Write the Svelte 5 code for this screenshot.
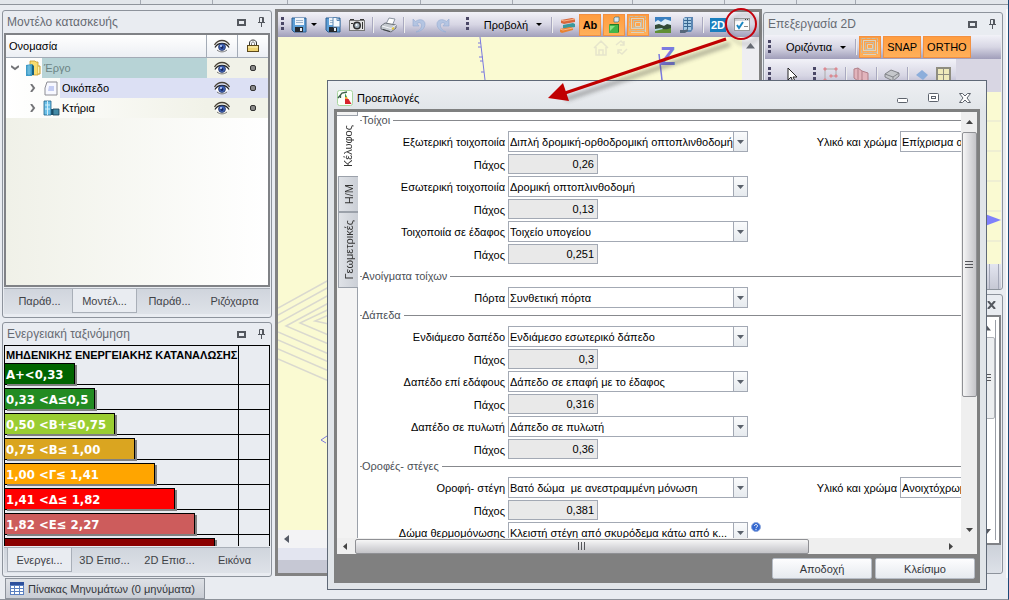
<script lang="ts">
	type Row = { label: string; value: string; thickness?: string; finish?: string; help?: boolean };
	type Group = { title: string; rows: Row[] };

	const groups: Group[] = [
		{
			title: 'Τοίχοι',
			rows: [
				{
					label: 'Εξωτερική τοιχοποιία',
					value: 'Διπλή δρομική-ορθοδρομική οπτοπλινθοδομή',
					thickness: '0,26',
					finish: 'Επίχρισμα ανοιχτόχρωμο'
				},
				{ label: 'Εσωτερική τοιχοποιία', value: 'Δρομική οπτοπλινθοδομή', thickness: '0,13' },
				{ label: 'Τοιχοποιία σε έδαφος', value: 'Τοιχείο υπογείου', thickness: '0,251' }
			]
		},
		{
			title: 'Ανοίγματα τοίχων',
			rows: [{ label: 'Πόρτα', value: 'Συνθετική πόρτα' }]
		},
		{
			title: 'Δάπεδα',
			rows: [
				{ label: 'Ενδιάμεσο δαπέδο', value: 'Ενδιάμεσο εσωτερικό δάπεδο', thickness: '0,3' },
				{ label: 'Δαπέδο επί εδάφους', value: 'Δάπεδο σε επαφή με το έδαφος', thickness: '0,316' },
				{ label: 'Δαπέδο σε πυλωτή', value: 'Δάπεδο σε πυλωτή', thickness: '0,36' }
			]
		},
		{
			title: 'Οροφές- στέγες',
			rows: [
				{
					label: 'Οροφή- στέγη',
					value: 'Βατό δώμα \u00a0με ανεστραμμένη μόνωση',
					thickness: '0,381',
					finish: 'Ανοιχτόχρωμη επίστρωση'
				},
				{
					label: 'Δώμα θερμομόνωσης',
					value: 'Κλειστή στέγη από σκυρόδεμα κάτω από κ...',
					help: true
				}
			]
		}
	];

	const energy = [
		{ label: 'Α+<0,33', width: 70, color: '#006400' },
		{ label: '0,33 <Α≤0,5', width: 90, color: '#228b22' },
		{ label: '0,50 <Β+≤0,75', width: 110, color: '#9acd32' },
		{ label: '0,75 <Β≤ 1,00', width: 130, color: '#daa520' },
		{ label: '1,00 <Γ≤ 1,41', width: 150, color: '#ffa500' },
		{ label: '1,41 <Δ≤ 1,82', width: 170, color: '#ff0000' },
		{ label: '1,82 <Ε≤ 2,27', width: 190, color: '#cd5c5c' },
		{ label: '', width: 210, color: '#8b0000' }
	];

	const tree = [
		{ label: 'Έργο', icon: 'project', level: 0 },
		{ label: 'Οικόπεδο', icon: 'plot', level: 1 },
		{ label: 'Κτήρια', icon: 'building', level: 1 }
	];

	const ribbonGroups = [141, 72, 75, 133, 92, 120, 92, 72, 59];
	const modelTabs = ['Παράθ...', 'Μοντέλ...', 'Παράθ...', 'Ριζόχαρτα'];
	const energyTabs = ['Ενεργει...', '3D Επισ...', '2D Επισ...', 'Εικόνα'];
	const dialogTabs = ['Κέλυφος', 'Η/Μ', 'Γεωμετρικές'];
</script>

{#snippet icon(name: string)}
	{#if name === 'save' || name === 'saveAs'}
		<svg width="16" height="16" viewBox="0 0 16 16">
			<path d="M1 1h14v14H3l-2-2z" fill="#5e9fd6" stroke="#2c5f92" />
			<path d="M4 1h9v7H4z" fill="#eef4fa" />
			<path d="M5 3.500h7M5 5.500h7" stroke="#9db4cc" />
			<path d="M4 10h8v5H4z" fill="#26292e" />
			<path d="M9 11h2v3H9z" fill="#e8edf2" />
			{#if name === 'saveAs'}
				<path d="M8 .5h4l3 3V10H8z" fill="#f5f9fd" stroke="#5d88b4" />
				<path d="M12 .5v3h3" fill="none" stroke="#5d88b4" />
			{/if}
		</svg>
	{:else if name === 'camera'}
		<svg width="16" height="14" viewBox="0 0 16 14">
			<path d="M1 1h4v2H1zM11 1h4v3h-4z" fill="#3c3c3c" />
			<rect x="0.500" y="2.500" width="15" height="10" fill="#e4e4e4" stroke="#777" />
			<circle cx="8" cy="7.500" r="4" fill="#2c2c2c" />
			<circle cx="8" cy="7.500" r="2.500" fill="#a4b2bb" />
			<circle cx="7.500" cy="7" r="1" fill="#fff" />
			<path d="M13.500 4v7M2 5.500h2" stroke="#333" />
		</svg>
	{:else if name === 'print'}
		<svg width="17" height="16" viewBox="0 0 17 16">
			<path d="M6 7l3-6 6 1-3 7z" fill="#fff" stroke="#8b94a0" />
			<path d="M1 9l4-3 11 2v3l-5 4-10-3z" fill="#c5cad0" stroke="#6c727a" />
			<path d="M2 9l9 2.500L16 8" fill="none" stroke="#f4f6fa" />
			<path d="M3 12l7 2v1l-7-2z" fill="#3a3d42" />
			<path d="M12 12l2-1" stroke="#e3c43c" stroke-width="2" />
		</svg>
	{:else if name === 'undo' || name === 'redo'}
		<svg width="14" height="16" viewBox="0 0 14 16" class:flip={name === 'redo'}>
			<path
				d="M1 2v7h6L5 6.500c3-2 5 0 4.500 3C9 12 7 14 4 15c5-.5 9-3.500 9-8C13 3 8 1 3.500 4.500z"
				fill="#b4c5e2"
				stroke="#93a9d0"
				stroke-width=".6"
			/>
		</svg>
	{:else if name === 'bricks'}
		<svg width="17" height="16" viewBox="0 0 17 16">
			<path d="M2 3l11-2 3 1v3L5 7 2 6z" fill="#d9663b" />
			<path d="M4 8l10-2 2 1v3L6 12l-2-1z" fill="#39999d" />
			<path d="M1 12l10-2 3 1v2L3 16l-2-1z" fill="#e88330" />
			<path d="M2 3l3 1 11-2M1 12l3 1 10-2" stroke="#f8b488" fill="none" />
		</svg>
	{:else if name === 'cube'}
		<svg width="16" height="18" viewBox="0 0 16 18">
			<path d="M8 2l1-1h4v4l-1 1H8z" fill="#d7e8f1" stroke="#43717e" stroke-width=".7" />
			<path d="M3 9l1-1h9v8l-1 1H3z" fill="#267b26" />
			<path d="M3 9h9v8H3z" fill="#43b649" />
			<path d="M4 10h5l-5 5z" fill="#8be085" />
		</svg>
	{:else if name === 'rings'}
		<svg width="18" height="18" viewBox="0 0 18 18" fill="none" stroke="#c4bca9">
			<rect x="0.500" y="0.500" width="16" height="14" stroke-dasharray="4 1" />
			<rect x="2.500" y="2.500" width="12" height="10" stroke="#dcd2bd" />
			<rect x="4.500" y="4.500" width="8" height="7" />
			<path d="M2 16.500h13M16.500 4v12M6.500 6.500h5v4h-5z" stroke="#dcd2bd" />
		</svg>
	{:else if name === 'photo'}
		<svg width="16" height="16" viewBox="0 0 16 16">
			<path fill="#3a7fc0" d="M0 0h16v8H0z" />
			<path d="M0 5l3-2 3 2 4-3 6 2v4H0z" fill="#dcecf6" />
			<path d="M0 8l4-1 5 2 3-2 4 1v8H0z" fill="#324b37" />
			<path d="M0 13c5-3 9 1 16-2v5H0z" fill="#5f8f35" />
			<path d="M0 12l7-1 1 1-8 2z" fill="#b5dbe6" />
		</svg>
	{:else if name === 'tower'}
		<svg width="14" height="16" viewBox="0 0 14 16">
			<path d="M3 2l2-2h8v12l-2 3H3z" fill="#5b86b3" />
			<path d="M4 1h7v12H4z" fill="#a5cae4" />
			<path d="M4 3.500h7M4 6.500h7M4 9.500h7M7.500 1v11" stroke="#386790" />
			<path d="M0 13h5l3-1v2l-3 2H0z" fill="#56677a" />
		</svg>
	{:else if name === 'check'}
		<svg width="16" height="14" viewBox="0 0 16 14">
			<rect x="0.500" y="0.500" width="15" height="12" fill="#fcfcfc" stroke="#999" />
			<path d="M1 1h14v2H1z" fill="#d3d6dc" />
			<path d="M11 1.500h1M13 1.500h1" stroke="#444" />
			<path d="M3 7l2 3 4-6" fill="none" stroke="#1b87c2" stroke-width="2" />
			<path d="M10 8.500h4" stroke="#888" />
		</svg>
	{:else if name === 'eye'}
		<svg width="16" height="14" viewBox="0 0 16 14">
			<path d="M1 8C4 3 12 3 15 8c-3 5-11 5-14 0z" fill="#fff" />
			<path d="M.5 6C4 0 12 0 15.500 6" fill="none" stroke="#4a4338" stroke-width="1.300" />
			<path d="M1 8.500C4 3 12 3 15 8.500" fill="none" stroke="#222" stroke-width="1.200" />
			<path d="M3 11c3 2.500 7 2.500 10 0" fill="none" stroke="#777" />
			<circle cx="8" cy="8" r="3.500" fill="#3e61b4" stroke="#22305b" stroke-width=".7" />
			<circle cx="8" cy="8.500" r="1.400" fill="#172862" />
			<circle cx="7" cy="7" r="1" fill="#c7d8ff" />
		</svg>
	{:else if name === 'lock'}
		<svg width="12" height="14" viewBox="0 0 12 14">
			<path d="M2.500 7V4c0-4 7-4 7 0v3" fill="none" stroke="#333" />
			<path d="M4.500 7V4.500c0-2 3-2 3 0V7" fill="none" stroke="#777" />
			<rect x="0.500" y="6.500" width="11" height="6" fill="#efd472" stroke="#5c4a1c" />
			<path d="M1 8h10" stroke="#fff5bf" />
		</svg>
	{:else if name === 'project'}
		<svg width="17" height="16" viewBox="0 0 17 16">
			<path d="M5 1h5l1 1h2v13H5z" fill="#f8dc70" stroke="#c79b2d" stroke-width=".8" />
			<path d="M13 6h2v8h-2" fill="#fff2a8" stroke="#c79b2d" />
			<path d="M1 5l6-1v12H1z" fill="#3f9cc8" />
			<path d="M7 4l2 2v9H7z" fill="#17617f" />
			<path d="M2 7h4M2 9h4M2 11h4M2 13h4M4 5v10" stroke="#8bd0ea" stroke-width=".7" />
		</svg>
	{:else if name === 'plot'}
		<svg width="14" height="15" viewBox="0 0 14 15">
			<path d="M3 1h10v13H1V7z" fill="#f7f8ff" stroke="#8d8d94" />
			<path d="M5 5h5v5H4z" fill="#c4cdf3" />
		</svg>
	{:else if name === 'building'}
		<svg width="17" height="16" viewBox="0 0 17 16">
			<path d="M1 1h7v14H1z" fill="#6cc0e8" stroke="#1d5f88" stroke-width=".8" />
			<path d="M4.500 1v14M2 5h5M2 9h5" stroke="#d0effb" />
			<path d="M8 9h3v6H8z" fill="#1d5875" />
			<path d="M10 9h6v6h-6z" fill="#438aa6" stroke="#173f55" stroke-width=".8" />
		</svg>
	{:else if name === 'app'}
		<svg width="16" height="16" viewBox="0 0 16 16">
			<rect x="0.500" y="0.500" width="15" height="15" rx="2" fill="#fbfffa" stroke="#a8d6a0" />
			<path d="M1 8l4-5 5-1M3.500 5v3" stroke="#3c5f4c" stroke-width="1.300" fill="none" />
			<path d="M8 3l2 4H8z" fill="#3c9a49" />
			<path d="M8 7h2l1.500 3H8z" fill="#f2a33a" />
			<path d="M8 9h3.500l3 5H8z" fill="#d8232c" />
		</svg>
	{/if}
{/snippet}

{#snippet panelHead(title: string)}
	<header class="panel-head">
		<h2>{title}</h2>
		<button class="bare" aria-label="Μεγιστοποίηση">
			<svg width="9" height="7" viewBox="0 0 9 7"><rect x="1" y="1" width="7" height="5" fill="none" stroke="#54585f" stroke-width="2" /></svg>
		</button>
		<button class="bare" aria-label="Καρφίτσωμα">
			<svg width="7" height="10" viewBox="0 0 7 10" fill="none" stroke="#54585f">
				<path d="M1.500 5V.5h4V5M4.500 1v4M0 5.500h7M3.500 6v4" />
			</svg>
		</button>
	</header>
{/snippet}

{#snippet tabs(items: string[], active: number)}
	<div class="tabs" role="tablist">
		{#each items as item, i}
			<button role="tab" class="tab" class:active={i === active} aria-selected={i === active}>{item}</button>
		{/each}
	</div>
{/snippet}

{#snippet combo(id: string, value: string)}
	<div class="combo">
		<select {id}><option>{value}</option></select>
		<span class="drop"><svg width="7" height="4" viewBox="0 0 7 4"><path d="M0 0h7L3.500 4z" fill="#5b626c" /></svg></span>
	</div>
{/snippet}

<div class="app">
	<div class="ribbon">
		{#each ribbonGroups as width}
			<span style:width="{width}px"></span>
		{/each}
	</div>

	<main>
		<div class="column left">
			<section class="panel model">
				{@render panelHead('Μοντέλο κατασκευής')}
				<div class="tree">
					<table>
						<thead>
							<tr>
								<th>Ονομασία</th>
								<th class="flag">{@render icon('eye')}</th>
								<th class="flag">{@render icon('lock')}</th>
							</tr>
						</thead>
						<tbody>
							{#each tree as node, i}
								<tr class:root={i === 0} class:alt={i === 1}>
									<td>
										<div class="node" class:child={node.level > 0}>
											<span class="twist">
												<svg width="8" height="8" viewBox="0 0 8 8" fill="none" stroke="#737477" stroke-width="2">
													<path d={node.level ? 'M2 0l3 4-3 4' : 'M0 2l4 3 4-3'} />
												</svg>
											</span>
											<span class="pic">{@render icon(node.icon)}</span>
											<span class="name">{node.label}</span>
										</div>
									</td>
									<td class="flag">{@render icon('eye')}</td>
									<td class="flag"><i class="dot"></i></td>
								</tr>
							{/each}
						</tbody>
					</table>
				</div>
				{@render tabs(modelTabs, 1)}
			</section>

			<section class="panel">
				{@render panelHead('Ενεργειακή ταξινόμηση')}
				<div class="energy">
					<div class="energy-title">ΜΗΔΕΝΙΚΗΣ ΕΝΕΡΓΕΙΑΚΗΣ ΚΑΤΑΝΑΛΩΣΗΣ</div>
					{#each energy as band}
						<div class="band">
							<span class="bar" style:width="{band.width}px" style:background={band.color}>{band.label}</span>
						</div>
					{/each}
				</div>
				{@render tabs(energyTabs, 0)}
			</section>
		</div>

		<section class="view">
			<div class="toolbar">
				<i class="grip"></i>
				<button class="tool first" aria-label="Αποθήκευση">{@render icon('save')}</button>
				<i class="caret"></i>
				<button class="tool apart" aria-label="Αποθήκευση ως">{@render icon('saveAs')}</button>
				<button class="tool" aria-label="Στιγμιότυπο">{@render icon('camera')}</button>
				<i class="sep"></i>
				<button class="tool" aria-label="Εκτύπωση">{@render icon('print')}</button>
				<i class="sep"></i>
				<button class="tool" aria-label="Αναίρεση">{@render icon('undo')}</button>
				<button class="tool" aria-label="Επανάληψη">{@render icon('redo')}</button>
				<span class="spacer"></span>
				<i class="grip"></i>
				<button class="menu">Προβολή <i class="caret"></i></button>
				<i class="sep"></i>
				<button class="tool" aria-label="Τοιχοποιία">{@render icon('bricks')}</button>
				<button class="tool on ab">Ab</button>
				<button class="tool on" aria-label="Όγκοι">{@render icon('cube')}</button>
				<button class="tool on" aria-label="Κάναβος">{@render icon('rings')}</button>
				<button class="tool" aria-label="Φόντο">{@render icon('photo')}</button>
				<button class="tool" aria-label="Κτήριο">{@render icon('tower')}</button>
				<i class="sep"></i>
				<button class="tool"><b class="two-d">2D</b></button>
				<button class="tool" aria-label="Προεπιλογές">{@render icon('check')}</button>
			</div>
			<div class="canvas">
				<svg class="drawing" viewBox="0 0 464 493">
					<g fill="none" stroke="#dad9cf" stroke-width="1.500">
						<path d="M0 286l60-33M0 278l60-33M0 271l60-33" />
						<path d="M60 261L8 289l52 22M60 268l-38 18 38 16M60 274l-23 10 23 5" />
						<path d="M0 295l60 26M0 303l60 26M0 312l60 26M0 322l60 26" />
					</g>
					<path d="M202 0l5 43M200 6h3M200 10h3M201 20h4M202 24h3M203 35h3" stroke="#7a79e0" fill="none" />
					<path d="M49 399l-6 4 5 3" stroke="#7a79e0" fill="none" />
					<path d="M381 17l3 26" stroke="#7a79e0" stroke-width="1.500" fill="none" />
					<text x="382" y="28" fill="#7a7ae0">Z</text>
					<g fill="none" stroke="#e6e5cc" stroke-width="1.500">
						<path d="M316 11l7-7 7 7M318 10v8h10v-8M321 18v-5h4v5" />
						<path d="M338 8l5-4 3 3M346 4v4h-4M349 12l-5 5-4-3M340 17v-4h4" />
					</g>
				</svg>
				<div class="track-v">
					<svg width="9" height="6" viewBox="0 0 9 6"><path d="M0 5.500L4.500 0 9 5.500z" fill="#686c75" /></svg>
				</div>
			</div>
			<div class="track-h">
				<svg width="5" height="8" viewBox="0 0 5 8"><path d="M5 0v8L0 4z" fill="#565b66" /></svg>
			</div>
			<div class="view-status"></div>
		</section>

		<div class="column right">
			<section class="panel edit">
				{@render panelHead('Επεξεργασία 2D')}
				<div class="toolbar">
					<i class="grip"></i>
					<button class="menu">Οριζόντια <i class="caret"></i></button>
					<i class="sep"></i>
					<button class="tool on" aria-label="Κάναβος">{@render icon('rings')}</button>
					<button class="tool on text">SNAP</button>
					<button class="tool on text">ORTHO</button>
				</div>
				<div class="edit-tools">
					<div class="toolbar tall">
						<i class="grip"></i>
						<svg class="cursor" width="10" height="16" viewBox="0 0 10 16"><path d="M1 1v12l3-3 2 5 2-1-2-4h4z" fill="#fff" stroke="#222" /></svg>
						<i class="grip"></i>
						<svg width="15" height="15" viewBox="0 0 15 15" fill="#dc8a93" stroke="#dc8a93"><path d="M2 2h11v7H8M2 2v11" fill="none" stroke="#aaa" /><path d="M1 1h2v2H1zM12 1h2v2h-2zM7 8h2v2H7zM12 8h2v2h-2zM1 12h2v2H1z" /></svg>
						<i class="sep"></i>
						<svg width="16" height="16" viewBox="0 0 16 16" fill="#e2b4bc" stroke="#b18089"><path d="M1 2l4-1 4 3 6 2v9l-6-2-4 1-4-3z" /><path d="M5 1v12M9 4v9" /></svg>
						<i class="sep"></i>
						<svg width="16" height="16" viewBox="0 0 16 16" fill="#c5c7cb" stroke="#828489"><path d="M1 7l6-4 8 3v3l-6 5-8-4z" /><path d="M1 7l8 3 6-4M9 10v4" fill="none" /></svg>
						<i class="sep"></i>
						<svg width="14" height="16" viewBox="0 0 14 16"><path d="M1 8l6-5 6 5-5 5z" fill="#8caedb" /></svg>
						<svg width="15" height="16" viewBox="0 0 15 16" fill="#efe9ba" stroke="#8f8d80"><path d="M1 1h13v14H1z" stroke-width="2" /><path d="M7.500 1v14M2 7.500h11" /></svg>
					</div>
				</div>
				<div class="plan">
					<svg class="cone" width="16" height="12" viewBox="0 0 16 12"><path d="M0 0l16 6L0 12z" fill="#7f80fb" /></svg>
				</div>
				<div class="plan-foot"></div>
			</section>

			<section class="panel props">
				<div class="props-head">
					<button class="bare" aria-label="Κλείσιμο πίνακα">
						<svg width="9" height="8" viewBox="0 0 9 8"><path d="M1 0l7 8M8 0L1 8" stroke="#54585f" stroke-width="2" /></svg>
					</button>
				</div>
				<div class="props-body">
					<div class="props-track">
						<svg width="9" height="6" viewBox="0 0 9 6"><path d="M0 5.500L4.500 0 9 5.500z" fill="#55585f" /></svg>
						<span class="thumb"><i class="ridges"></i></span>
						<svg width="9" height="6" viewBox="0 0 9 6"><path d="M0 0h9L4.500 5.500z" fill="#55585f" /></svg>
					</div>
				</div>
				<div class="props-foot"></div>
			</section>
		</div>
	</main>

	<footer class="status">
		<button class="messages">
			<svg width="14" height="13" viewBox="0 0 14 13">
				<path d="M0 0h14v13H0z" fill="#5a7fc0" />
				<path d="M0 0h14v3H0z" fill="#2c4f9c" />
				<path d="M1 4h3v2H1zM5 4h4v2H5zM10 4h3v2h-3zM1 7h3v2H1zM5 7h4v2H5zM10 7h3v2h-3zM1 10h3v2H1zM5 10h4v2H5zM10 10h3v2h-3z" fill="#fff" />
			</svg>
			Πίνακας Μηνυμάτων (0 μηνύματα)
		</button>
	</footer>

	<div class="dialog" role="dialog" aria-labelledby="dialog-title">
		<header class="dialog-head">
			{@render icon('app')}
			<h1 id="dialog-title">Προεπιλογές</h1>
			<button class="bare" aria-label="Ελαχιστοποίηση">
				<svg width="11" height="10" viewBox="0 0 11 10"><rect x="0.500" y="5.500" width="10" height="4" rx="1" fill="#fff" stroke="#5d636c" /></svg>
			</button>
			<button class="bare" aria-label="Μεγιστοποίηση">
				<svg width="11" height="10" viewBox="0 0 11 10" fill="#fff" stroke="#5d636c"><rect x="0.500" y="0.500" width="10" height="8" rx="1" /><rect x="3.500" y="3.500" width="4" height="2" /></svg>
			</button>
			<button class="bare" aria-label="Κλείσιμο">
				<svg width="12" height="10" viewBox="0 0 12 10"><path d="M.5.5h3L6 3 8.500.5h3L8 5l3.500 4.500h-3L6 7 3.500 9.500h-3L4 5z" fill="#fff" stroke="#5d636c" /></svg>
			</button>
		</header>

		<div class="dialog-body">
			<div class="sheet">
				<div class="side-tabs" role="tablist">
					{#each dialogTabs as tab, i}
						<button role="tab" class="side-tab" class:active={i === 0} aria-selected={i === 0}><span>{tab}</span></button>
					{/each}
				</div>
				<div class="form">
					{#each groups as group, g}
						<fieldset class:roomy={g === 0}>
							<legend>{group.title}</legend>
							{#each group.rows as row, r}
								{@const id = `f-${g}-${r}`}
								<div class="row">
									<label for={id}>{row.label}</label>
									{@render combo(id, row.value)}
									{#if row.finish}
										<label for="{id}-finish">Υλικό και χρώμα</label>
										{@render combo(`${id}-finish`, row.finish)}
									{/if}
									{#if row.help}
										<svg class="help" width="10" height="10" viewBox="0 0 10 10">
											<circle cx="5" cy="5" r="4.500" fill="#3468d0" stroke="#8fa9dd" />
											<path d="M3.500 4c0-2 3-2 3 0C6.500 5 5 5 5 6.200M5 7v1.200" stroke="#fff" fill="none" />
										</svg>
									{/if}
								</div>
								{#if row.thickness}
									<div class="row">
										<label for="{id}-t">Πάχος</label>
										<input id="{id}-t" class="thickness" value={row.thickness} readonly />
									</div>
								{/if}
							{/each}
						</fieldset>
					{/each}
				</div>
				<div class="scroll-v">
					<svg width="7" height="4" viewBox="0 0 7 4"><path d="M0 4h7L3.500 0z" fill="#444" /></svg>
					<span class="thumb"><i class="ridges"></i></span>
					<svg width="7" height="4" viewBox="0 0 7 4"><path d="M0 0h7L3.500 4z" fill="#444" /></svg>
				</div>
			</div>
			<div class="scroll-h">
				<svg width="4" height="7" viewBox="0 0 4 7"><path d="M4 0v7L0 3.500z" fill="#444" /></svg>
				<span class="thumb"><i class="ridges"></i></span>
				<svg width="4" height="7" viewBox="0 0 4 7"><path d="M0 0v7l4-3.500z" fill="#444" /></svg>
			</div>
			<div class="actions">
				<button class="action">Αποδοχή</button>
				<button class="action">Κλείσιμο</button>
			</div>
		</div>
	</div>

	<svg class="callout" width="240" height="110" viewBox="530 0 240 110">
		<defs>
			<filter id="soft" x="-10%" y="-10%" width="130%" height="130%"><feGaussianBlur stdDeviation="2" /></filter>
		</defs>
		<g opacity=".4" filter="url(#soft)" transform="translate(4 5)">
			<path d="M726 39L562 94" stroke="#333" stroke-width="4" />
			<circle cx="741" cy="24" r="15" fill="none" stroke="#555" stroke-width="2" />
		</g>
		<path d="M726 39L562 94" stroke="#c00000" stroke-width="3" />
		<path d="M548 98l15-15 6 18z" fill="#c00000" />
		<circle cx="741" cy="24" r="15" fill="none" stroke="#c4000c" stroke-width="2" />
	</svg>
</div>

<style>
	:global(body) {
		margin: 0;
		background: #e9ecf1;
	}

	.app {
		position: relative;
		display: flex;
		flex-direction: column;
		height: 100vh;
		min-height: 600px;
		box-sizing: border-box;
		border-right: 1px solid #1c4a78;
		border-bottom: 1px solid #8d929a;
		overflow: hidden;
		font-family: 'Liberation Sans', Arial, sans-serif;
		font-size: 11px;
		line-height: 14px;
		color: #000;
	}

	.app :where(button, select, input) {
		font: inherit;
		color: inherit;
		margin: 0;
		padding: 0;
		box-sizing: border-box;
	}

	svg {
		display: block;
		flex-shrink: 0;
	}

	h1,
	h2 {
		flex: 1;
		margin: 0;
		font-size: 12px;
		font-weight: normal;
	}

	h1 {
		font-size: 11px;
	}

	.flip {
		transform: scaleX(-1);
	}

	.bare {
		display: flex;
		border: 0;
		background: none;
	}

	.ribbon {
		display: flex;
		height: 4px;
		flex-shrink: 0;
		border-bottom: 1px solid #8f949c;
		background: #e2e6eb;
	}

	.ribbon span {
		box-sizing: border-box;
		border-right: 1px solid #a4a9b2;
	}

	main {
		flex: 1;
		min-height: 0;
		display: grid;
		grid-template-columns: 275px minmax(0, 1fr) 246px;
		padding-top: 4px;
	}

	.column {
		display: flex;
		flex-direction: column;
		gap: 4px;
		min-height: 0;
	}

	.left {
		padding: 1px 3px 1px 2px;
	}

	.right {
		padding: 3px 3px 4px 1px;
		border-right: 2px solid #fafafa;
	}

	.panel {
		display: flex;
		flex-direction: column;
		padding: 0 1px;
		border: 1px solid #8d939c;
		border-radius: 3px;
		background: #e9ecf1;
	}

	.model {
		flex: 1;
		min-height: 0;
	}

	.panel-head {
		display: flex;
		align-items: center;
		gap: 12px;
		height: 22px;
		flex-shrink: 0;
		padding: 0 5px 0 3px;
		color: #666a72;
	}

	.tree {
		flex: 1;
		min-height: 0;
		border: 2px solid #808286;
		background: linear-gradient(90deg, #f0f1e8, #fff);
	}

	table {
		width: 100%;
		border-collapse: collapse;
		table-layout: fixed;
	}

	th {
		height: 22px;
		padding: 0 3px;
		font-weight: normal;
		text-align: left;
		background: linear-gradient(#fff, #eceff4);
		border-bottom: 1px solid #a3abb6;
	}

	td {
		height: 20px;
		padding: 0;
		background: #f1f2e8;
	}

	.flag {
		width: 30px;
		padding: 0;
	}

	th.flag {
		border-left: 1px solid #a3abb6;
	}

	.flag :global(svg) {
		margin: 0 auto;
	}

	.dot {
		display: block;
		width: 4px;
		height: 4px;
		margin: 0 auto;
		border: 1px solid #333;
		border-radius: 2px;
		background: #888;
	}

	.node {
		display: flex;
		align-items: stretch;
		height: 20px;
		line-height: 20px;
		background: linear-gradient(90deg, #fff, #f1f2e8);
	}

	.child {
		padding-left: 18px;
	}

	.twist,
	.pic {
		display: flex;
		align-items: center;
		justify-content: center;
		width: 18px;
	}

	.name {
		flex: 1;
		padding-left: 2px;
	}

	.root .name {
		background: #b7d3d6;
		color: #6c8484;
	}

	.alt .name,
	.alt .flag {
		background: #dce0f4;
	}

	.tabs {
		display: flex;
		height: 25px;
		margin: 1px 0 3px;
		padding-left: 3px;
		flex-shrink: 0;
		background: linear-gradient(#d0d5dd, #dee2e8);
		border-top: 1px solid #a9afb8;
	}

	.tab {
		width: 65px;
		height: 24px;
		border: 1px solid transparent;
		border-top: 0;
		background: none;
		color: #3f4247;
	}

	.tab.active {
		border-color: #a9afb8;
		background: #e9ecf1;
	}

	.energy {
		height: 200px;
		overflow: hidden;
		border: 1px solid #000;
		border-bottom: 0;
		background: linear-gradient(#000, #000) 233px 0 / 1px 100% no-repeat;
	}

	.energy-title {
		height: 18px;
		padding-left: 1px;
		font-weight: bold;
		line-height: 18px;
		white-space: nowrap;
	}

	.band {
		display: flow-root;
		height: 25px;
		box-sizing: border-box;
		border-bottom: 1px solid #000;
	}

	.energy-title + .band {
		height: 22px;
		margin-top: -1px;
	}

	.energy-title + .band .bar {
		margin-top: 0;
	}

	.bar {
		display: block;
		height: 21px;
		margin-top: 3px;
		padding-left: 1px;
		box-sizing: border-box;
		border: 1px solid #000;
		border-width: 1px 1px 0 0;
		box-shadow: 2px 2px #808080;
		color: #fff;
		font: bold 13px/21px 'DejaVu Sans Condensed', 'DejaVu Sans', sans-serif;
		white-space: nowrap;
	}

	.view {
		display: flex;
		flex-direction: column;
		min-width: 0;
		margin-bottom: 2px;
		border: 3px solid #828282;
	}

	.toolbar {
		display: flex;
		align-items: center;
		height: 25px;
		flex-shrink: 0;
		padding: 0 5px 0 3px;
		background: linear-gradient(#f2f2f8, #d7d6e4 50%, #a09eba);
	}

	.grip {
		width: 3px;
		height: 15px;
		flex-shrink: 0;
		background: repeating-linear-gradient(#4a4766 0 3px, transparent 3px 5px);
	}

	.caret {
		display: inline-block;
		border: 3px solid transparent;
		border-top-color: #000;
		border-bottom: 0;
	}

	.sep {
		width: 1px;
		height: 16px;
		flex-shrink: 0;
		margin: 0 3px;
		background: #a9a9c0;
		box-shadow: 1px 0 #eee;
	}

	.spacer {
		flex: 1;
	}

	.tool {
		display: flex;
		align-items: center;
		justify-content: center;
		min-width: 24px;
		height: 22px;
		border: 1px solid transparent;
		background: none;
	}

	.first {
		margin-left: 3px;
	}

	.apart {
		margin-left: 4px;
	}

	.tool.on {
		min-width: 22px;
		margin-right: 2px;
		border-color: #f29142;
		background: linear-gradient(#ff9c3f, #ffb05a);
	}

	.tool.text {
		padding: 0 3px;
	}

	.ab {
		font-weight: bold;
	}

	.menu {
		display: flex;
		align-items: center;
		gap: 8px;
		border: 0;
		padding: 0 6px 0 15px;
		background: none;
	}

	.two-d {
		padding: 0 1px;
		background: #1a7fbe;
		color: #fff;
	}

	.canvas {
		flex: 1;
		min-height: 0;
		display: flex;
		justify-content: space-between;
		overflow: hidden;
		background: #fafad2;
	}

	.drawing {
		width: 464px;
		height: 493px;
		font-size: 25px;
		font-weight: bold;
	}

	.track-v {
		width: 17px;
		flex-shrink: 0;
		box-sizing: border-box;
		padding: 6px 4px;
		background: #eeeef2;
	}

	.track-h {
		display: flex;
		align-items: center;
		height: 18px;
		padding-left: 6px;
		background: #f3f3f5;
	}

	.view-status {
		height: 25px;
		background: linear-gradient(#e3e5f0 50%, #c6c8d4 50%);
	}

	.edit {
		height: 276px;
	}

	.edit .toolbar {
		height: 24px;
	}

	.edit-tools {
		display: flex;
		background: #d8d6e3;
	}

	.edit .tall {
		height: 33px;
		align-items: flex-start;
		gap: 7px;
		padding-top: 8px;
		box-sizing: border-box;
	}

	.tall .sep {
		margin: 0;
	}

	.cursor {
		margin: 0 9px;
	}

	.plan {
		position: relative;
		flex: 1;
		background: repeating-linear-gradient(#fafad2 0 28px, #efefd3 28px 30px);
	}

	.cone {
		position: absolute;
		right: 0;
		top: 122px;
	}

	.plan-foot {
		height: 25px;
		background: repeating-linear-gradient(90deg, transparent 0 8px, #a4a8b8 8px 9px), linear-gradient(#e3e5f0, #c6c8d4);
	}

	.props {
		flex: 1;
		min-height: 0;
	}

	.props-head {
		display: flex;
		justify-content: flex-end;
		align-items: center;
		height: 20px;
		padding-right: 5px;
	}

	.props-body {
		flex: 1;
		display: flex;
		justify-content: flex-end;
		padding: 3px;
		border: 2px solid #808286;
		background: #fff;
	}

	.props-track {
		display: flex;
		flex-direction: column;
		align-items: center;
		gap: 6px;
		width: 17px;
		padding: 5px 0;
		border-right: 1px solid #9a9ea6;
	}

	.thumb {
		display: flex;
		align-items: center;
		justify-content: center;
		box-sizing: border-box;
		border: 1px solid #8f9094;
		border-radius: 2px;
		background: linear-gradient(90deg, #f6f6f6, #dcdcdf 50%, #c4c4c8);
	}

	.props-track .thumb {
		width: 16px;
		height: 82px;
		margin-bottom: auto;
		border-color: #b0b3b8;
		background: #eceef0;
	}

	.props-foot {
		height: 28px;
		background: linear-gradient(#ccd1d9, #dde1e8);
	}

	.status {
		flex-shrink: 0;
		height: 21px;
		padding-left: 5px;
	}

	.messages {
		display: flex;
		align-items: center;
		gap: 4px;
		height: 21px;
		padding: 0 9px 0 4px;
		border: 1px solid #8d939c;
		background: linear-gradient(#dee1e6, #c9cdd5);
		color: #33363b;
	}

	.dialog {
		position: absolute;
		inset: 80px 21px 9px 327px;
		display: flex;
		flex-direction: column;
		padding: 0 6px;
		border: 1px solid #5f6977;
		background: linear-gradient(#edeff2, #e1e5e9 30px);
	}

	.dialog-head {
		display: flex;
		align-items: center;
		gap: 4px;
		height: 28px;
		flex-shrink: 0;
		padding: 6px 9px 0 3px;
		box-sizing: border-box;
	}

	.dialog-head .bare {
		margin-left: 16px;
	}

	.dialog-body {
		flex: 1;
		min-height: 0;
		display: flex;
		flex-direction: column;
		margin-bottom: 6px;
		border: 3px solid #7f8080;
		background: #808080;
	}

	.sheet {
		flex: 1;
		min-height: 0;
		display: flex;
		background: #fff;
	}

	.side-tabs {
		width: 21px;
		flex-shrink: 0;
		box-sizing: border-box;
		padding-top: 3px;
		background: #f3f3f3;
		border-right: 1px solid #9ba1aa;
	}

	.side-tab {
		display: flex;
		align-items: center;
		justify-content: center;
		width: 20px;
		margin-left: 1px;
		padding: 7px 0;
		border: 1px solid #9ba1aa;
		border-right: 0;
		background: linear-gradient(90deg, #dfe2e7, #cbcfd6);
	}

	.side-tab.active {
		width: 21px;
		margin-left: 0;
		padding: 9px 0;
		border-left: 0;
		border-bottom: 0;
		background: #fff;
	}

	.side-tab span {
		writing-mode: vertical-rl;
		transform: rotate(180deg);
		color: #333;
	}

	.form {
		flex: 1;
		min-width: 0;
		overflow: hidden;
		padding: 1px 0 0 2px;
	}

	fieldset {
		display: flex;
		flex-direction: column;
		gap: 2px;
		min-width: 0;
		margin: 0;
		padding: 4px 0 0;
		border: 0;
	}

	.roomy {
		padding-bottom: 5px;
	}

	legend {
		display: flex;
		align-items: center;
		width: 100%;
		height: 14px;
		padding: 0;
		color: #4b4f56;
		white-space: nowrap;
	}

	legend::before {
		content: '';
		width: 2px;
		height: 1px;
		background: #87898d;
	}

	legend::after {
		content: '';
		flex: 1;
		height: 1px;
		margin-left: 3px;
		background: #87898d;
	}

	.row {
		display: grid;
		grid-template-columns: 145px 240px 146px 240px;
		column-gap: 3px;
		align-items: center;
	}

	.row label {
		padding-top: 1px;
		text-align: right;
		white-space: nowrap;
	}

	.combo {
		display: grid;
		grid-template-columns: minmax(0, 1fr) 14px;
		height: 21px;
		box-sizing: border-box;
		border: 1px solid #a3a9b4;
		background: #fff;
	}

	.combo select {
		grid-area: 1 / 1 / 2 / 3;
		appearance: none;
		border: 0;
		padding: 0 14px 0 1px;
		background: none;
	}

	.drop {
		grid-area: 1 / 2;
		display: flex;
		align-items: center;
		justify-content: center;
		border-left: 1px solid #a3a9b4;
		background: linear-gradient(#fafbfc, #e6eaee);
		pointer-events: none;
	}

	.thickness {
		width: 90px;
		height: 20px;
		padding: 0 3px;
		border: 1px solid #a3a9b4;
		background: #e9e9e9;
		text-align: right;
	}

	.help {
		align-self: start;
	}

	.scroll-v,
	.scroll-h {
		display: flex;
		align-items: center;
		flex-shrink: 0;
		background: #efefef;
	}

	.scroll-v {
		flex-direction: column;
		gap: 8px;
		width: 16px;
		padding: 8px 0 6px;
		box-sizing: border-box;
	}

	.scroll-v .thumb {
		width: 15px;
		height: 265px;
		margin-bottom: auto;
	}

	.ridges {
		width: 8px;
		height: 8px;
		background: repeating-linear-gradient(#55565a 0 1px, transparent 1px 3px);
	}

	.scroll-h {
		gap: 8px;
		height: 16px;
		padding: 0 24px 0 6px;
	}

	.scroll-h .thumb {
		width: 454px;
		height: 15px;
		margin-right: auto;
		background: linear-gradient(#f6f6f6, #dcdcdf 50%, #c4c4c8);
	}

	.scroll-h .ridges {
		background: repeating-linear-gradient(90deg, #55565a 0 1px, transparent 1px 3px);
	}

	.actions {
		display: flex;
		justify-content: flex-end;
		gap: 3px;
		padding: 4px 2px 1px;
	}

	.action {
		width: 100px;
		height: 21px;
		border: 1px solid #b6bcc5;
		border-radius: 2px;
		background: linear-gradient(#fdfdfe, #e6eaef);
		color: #33363b;
	}

	.callout {
		position: absolute;
		left: 530px;
		top: 0;
		pointer-events: none;
	}
</style>
